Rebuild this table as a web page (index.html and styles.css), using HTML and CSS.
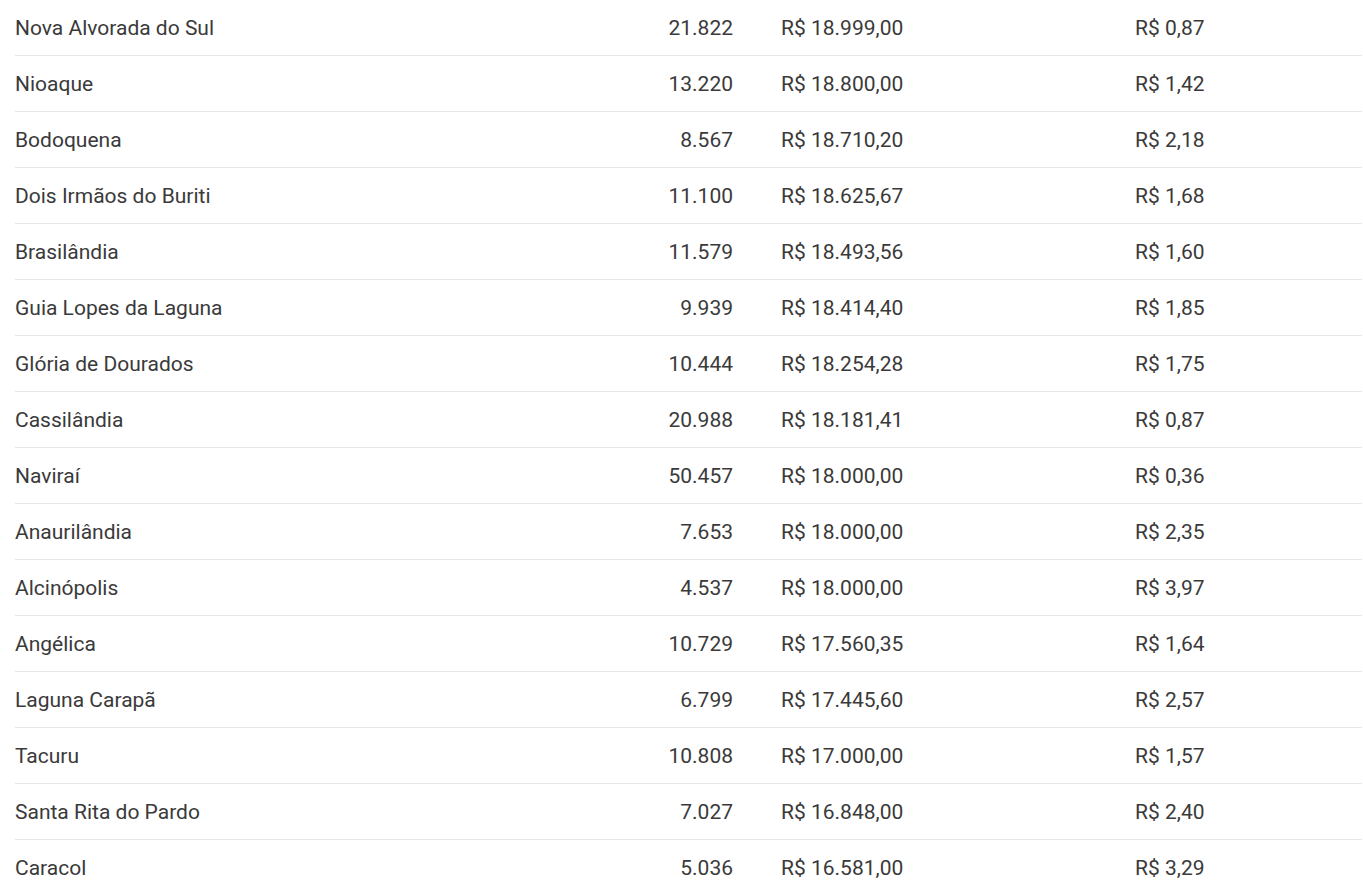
FILE: index.html
```html
<!DOCTYPE html>
<html lang="pt-BR">
<head>
<meta charset="utf-8">
<link rel="stylesheet" href="styles.css">
</head>
<body>
<table class="data">
<colgroup><col class="c-name"><col class="c-pop"><col class="c-val"><col class="c-per"></colgroup>
<tbody>
<tr><td>Nova Alvorada do Sul</td><td class="num">21.822</td><td class="val">R$ 18.999,00</td><td class="per">R$ 0,87</td></tr>
<tr><td>Nioaque</td><td class="num">13.220</td><td class="val">R$ 18.800,00</td><td class="per">R$ 1,42</td></tr>
<tr><td>Bodoquena</td><td class="num">8.567</td><td class="val">R$ 18.710,20</td><td class="per">R$ 2,18</td></tr>
<tr><td>Dois Irmãos do Buriti</td><td class="num">11.100</td><td class="val">R$ 18.625,67</td><td class="per">R$ 1,68</td></tr>
<tr><td>Brasilândia</td><td class="num">11.579</td><td class="val">R$ 18.493,56</td><td class="per">R$ 1,60</td></tr>
<tr><td>Guia Lopes da Laguna</td><td class="num">9.939</td><td class="val">R$ 18.414,40</td><td class="per">R$ 1,85</td></tr>
<tr><td>Glória de Dourados</td><td class="num">10.444</td><td class="val">R$ 18.254,28</td><td class="per">R$ 1,75</td></tr>
<tr><td>Cassilândia</td><td class="num">20.988</td><td class="val">R$ 18.181,41</td><td class="per">R$ 0,87</td></tr>
<tr><td>Naviraí</td><td class="num">50.457</td><td class="val">R$ 18.000,00</td><td class="per">R$ 0,36</td></tr>
<tr><td>Anaurilândia</td><td class="num">7.653</td><td class="val">R$ 18.000,00</td><td class="per">R$ 2,35</td></tr>
<tr><td>Alcinópolis</td><td class="num">4.537</td><td class="val">R$ 18.000,00</td><td class="per">R$ 3,97</td></tr>
<tr><td>Angélica</td><td class="num">10.729</td><td class="val">R$ 17.560,35</td><td class="per">R$ 1,64</td></tr>
<tr><td>Laguna Carapã</td><td class="num">6.799</td><td class="val">R$ 17.445,60</td><td class="per">R$ 2,57</td></tr>
<tr><td>Tacuru</td><td class="num">10.808</td><td class="val">R$ 17.000,00</td><td class="per">R$ 1,57</td></tr>
<tr><td>Santa Rita do Pardo</td><td class="num">7.027</td><td class="val">R$ 16.848,00</td><td class="per">R$ 2,40</td></tr>
<tr><td>Caracol</td><td class="num">5.036</td><td class="val">R$ 16.581,00</td><td class="per">R$ 3,29</td></tr>
</tbody>
</table>
</body>
</html>
```
FILE: styles.css
```css
html, body {
  margin: 0;
  padding: 0;
  background: #ffffff;
}
body {
  padding-left: 15px;
  padding-right: 1px;
  font-family: Roboto, "Liberation Sans", sans-serif;
  color: #3a3a3a;
}
.data {
  width: 1347px;
  border-collapse: collapse;
  table-layout: fixed;
}
.c-name { width: 600px; }
.c-pop { width: 118px; }
.c-val { width: 354px; }
.c-per { width: 275px; }
.data td {
  height: 55px;
  padding: 0;
  font-size: 21px;
  font-weight: 400;
  line-height: 26px;
  border-bottom: 1px solid #e6e6e6;
  vertical-align: middle;
  white-space: nowrap;
}
.data td.num { text-align: right; }
.data td.val, .data td.per { padding-left: 48px; }
```
